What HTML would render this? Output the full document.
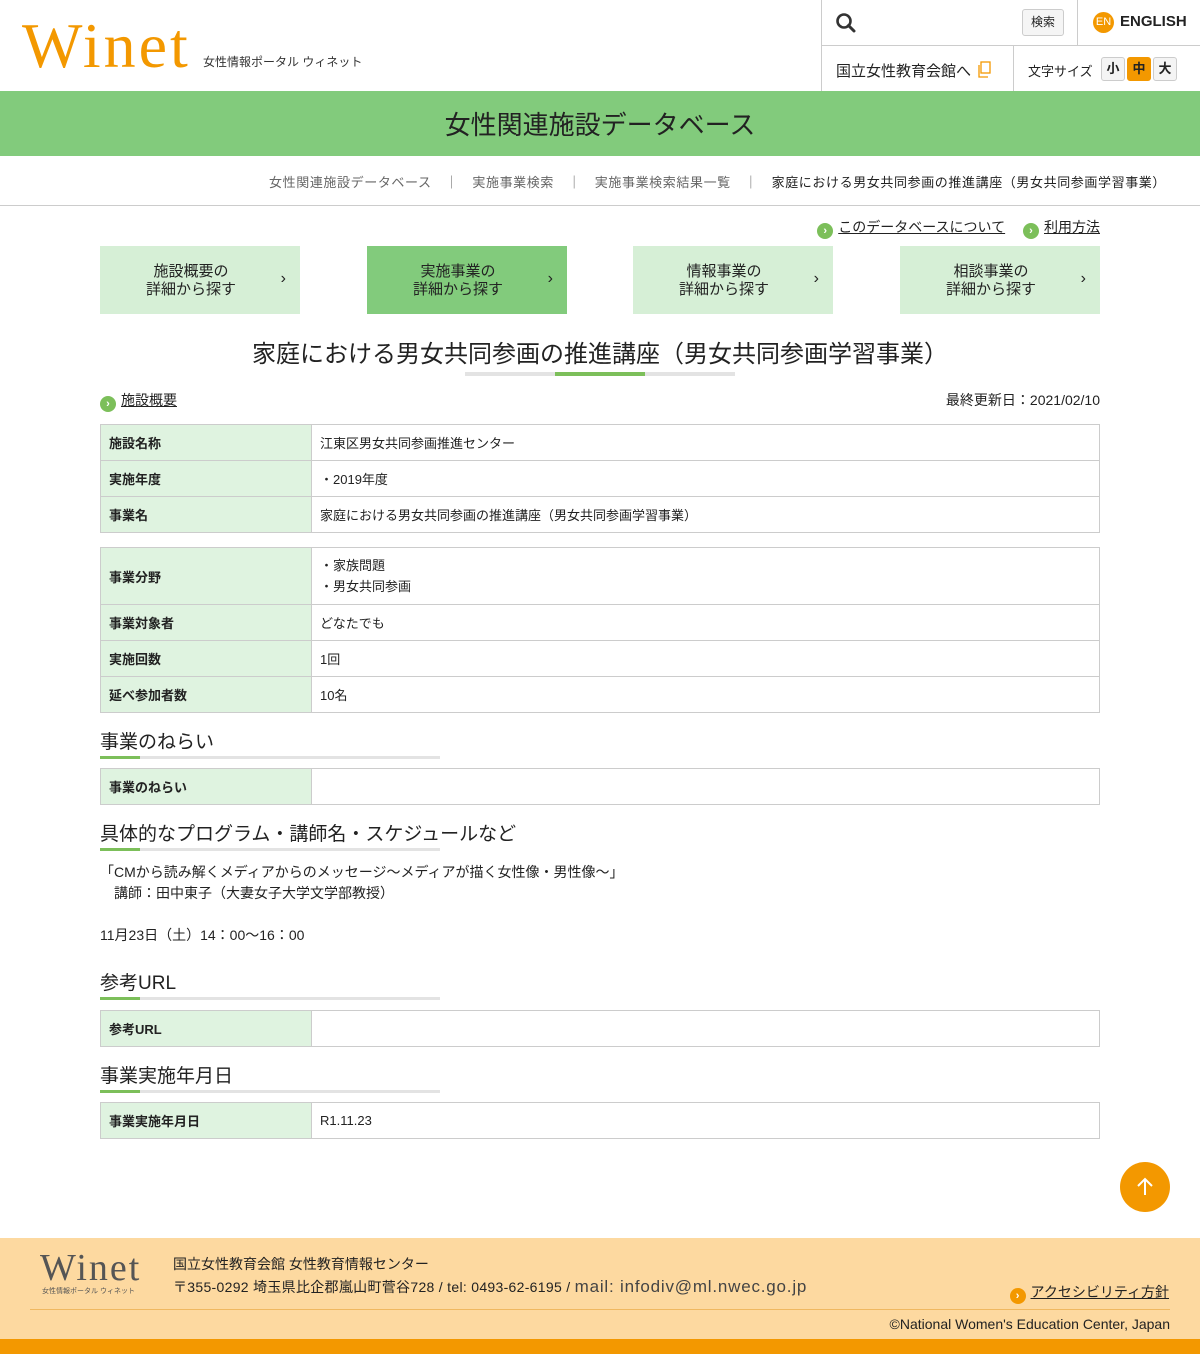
<!DOCTYPE html>
<html><head><meta charset="utf-8">
<style>
*{margin:0;padding:0;box-sizing:border-box}
body{width:1200px;height:1354px;position:relative;background:#fff;font-family:"Liberation Sans","Noto Sans CJK JP",sans-serif;color:#222;overflow:hidden}
.a{position:absolute}
.logo{font-family:"Liberation Serif","Noto Serif CJK SC",serif;color:#f39800;font-size:64px;letter-spacing:3px}
.tag{font-size:12px;color:#333}
.ic{display:inline-block;width:16px;height:16px;border-radius:50%;background:#7cbf5a;color:#fff;font-size:11px;line-height:16px;text-align:center;vertical-align:-2px;margin-right:5px;font-weight:bold}
.btn{position:absolute;top:246px;width:200px;height:68px;background:#d6efd6;font-size:15px;line-height:18px;text-align:center;padding-top:17px;padding-right:18px;color:#222}
.btn span{position:absolute;right:14px;top:24px;font-size:16px}
table{position:absolute;left:100px;width:1000px;border-collapse:collapse;font-size:13px}
td{border:1px solid #ccc;height:36px;padding:0 8px}
td.l{width:211px;background:#dff3e0;font-weight:bold}
.h{position:absolute;left:100px;font-size:19px;color:#222}
.ul{position:absolute;left:100px;width:340px;height:3px;background:#e3e3e3}
.ul:before{content:"";position:absolute;left:0;top:0;width:40px;height:3px;background:#7cbf5a}
.fs{display:inline-block;width:24px;height:24px;border:1px solid #ccc;border-radius:3px;background:#f4f4f4;text-align:center;line-height:22px;font-size:13px;font-weight:bold;margin-left:2px}
</style></head><body>
<div class="a logo" style="left:22px;top:8px;line-height:76px">Winet</div>
<div class="a tag" style="left:203px;top:53px">女性情報ポータル ウィネット</div>
<div class="a" style="left:821px;top:0;width:1px;height:91px;background:#ccc"></div>
<div class="a" style="left:822px;top:45px;width:378px;height:1px;background:#ccc"></div>
<div class="a" style="left:1077px;top:0;width:1px;height:45px;background:#ccc"></div>
<div class="a" style="left:1013px;top:46px;width:1px;height:45px;background:#ccc"></div>
<svg class="a" style="left:835px;top:12px" width="22" height="22" viewBox="0 0 22 22"><circle cx="9" cy="9" r="6.5" fill="none" stroke="#333" stroke-width="2.6"/><path d="M13.5 13.5l5.5 5.5" stroke="#333" stroke-width="3" stroke-linecap="round"/></svg>
<div class="a" style="left:1022px;top:9px;width:42px;height:27px;border:1px solid #ccc;border-radius:3px;background:#f5f5f5;font-size:12px;text-align:center;line-height:25px">検索</div>
<div class="a" style="left:1093px;top:12px;width:21px;height:21px;border-radius:50%;background:#f39800;color:#fff;font-size:11px;text-align:center;line-height:21px">EN</div>
<div class="a" style="left:1120px;top:13px;font-size:15px;font-weight:bold;color:#222">ENGLISH</div>
<div class="a" style="left:836px;top:60px;font-size:15px">国立女性教育会館へ</div>
<svg class="a" style="left:977px;top:61px" width="15" height="17" viewBox="0 0 15 17"><rect x="4" y="1" width="9" height="11" fill="none" stroke="#f39800" stroke-width="1.3"/><path d="M2 4v12h9" fill="none" stroke="#f39800" stroke-width="1.3"/></svg>
<div class="a" style="left:1028px;top:61px;font-size:13px">文字サイズ</div>
<div class="a" style="left:1099px;top:57px"><span class="fs">小</span><span class="fs" style="background:#f39800;border-color:#f39800">中</span><span class="fs">大</span></div>
<div class="a" style="left:0;top:91px;width:1200px;height:65px;background:#82cb7c;text-align:center;font-size:26px;line-height:68px;color:#222">女性関連施設データベース</div>
<div class="a" style="left:0;top:205px;width:1200px;height:1px;background:#ccc"></div>
<div class="a" style="right:34px;top:172px;font-size:13px;letter-spacing:0.6px;color:#666;white-space:nowrap">女性関連施設データベース　｜　実施事業検索　｜　実施事業検索結果一覧　｜　<span style="color:#222">家庭における男女共同参画の推進講座（男女共同参画学習事業）</span></div>
<div class="a" style="right:100px;top:217px;font-size:14px"><span class="ic">›</span><u>このデータベースについて</u>　 <span class="ic">›</span><u>利用方法</u></div>
<div class="btn" style="left:100px">施設概要の<br>詳細から探す<span>›</span></div>
<div class="btn" style="left:367px;background:#82cb7c">実施事業の<br>詳細から探す<span>›</span></div>
<div class="btn" style="left:633px">情報事業の<br>詳細から探す<span>›</span></div>
<div class="btn" style="left:900px">相談事業の<br>詳細から探す<span>›</span></div>
<div class="a" style="left:0;width:1200px;top:334px;text-align:center;font-size:24px;padding-left:0">家庭における男女共同参画の推進講座（男女共同参画学習事業）</div>
<div class="a" style="left:465px;top:372px;width:270px;height:4px;background:#e3e3e3"></div>
<div class="a" style="left:555px;top:372px;width:90px;height:4px;background:#7cbf5a"></div>
<div class="a" style="left:100px;top:390px;font-size:14px"><span class="ic">›</span><u>施設概要</u></div>
<div class="a" style="right:100px;top:390px;font-size:14px">最終更新日：2021/02/10</div>
<table style="top:424px"><tr><td class="l">施設名称</td><td>江東区男女共同参画推進センター</td></tr><tr><td class="l">実施年度</td><td>・2019年度</td></tr><tr><td class="l">事業名</td><td>家庭における男女共同参画の推進講座（男女共同参画学習事業）</td></tr></table>
<table style="top:547px"><tr><td class="l" style="height:57px">事業分野</td><td style="line-height:21px">・家族問題<br>・男女共同参画</td></tr><tr><td class="l">事業対象者</td><td>どなたでも</td></tr><tr><td class="l">実施回数</td><td>1回</td></tr><tr><td class="l">延べ参加者数</td><td>10名</td></tr></table>
<div class="h" style="top:727px">事業のねらい</div><div class="ul" style="top:756px"></div>
<table style="top:768px"><tr><td class="l">事業のねらい</td><td></td></tr></table>
<div class="h" style="top:819px">具体的なプログラム・講師名・スケジュールなど</div><div class="ul" style="top:848px"></div>
<div class="a" style="left:100px;top:862px;font-size:14px;line-height:21px">「CMから読み解くメディアからのメッセージ～メディアが描く女性像・男性像～」<br>　講師：田中東子（大妻女子大学文学部教授）<br><br>11月23日（土）14：00～16：00</div>
<div class="h" style="top:968px">参考URL</div><div class="ul" style="top:997px"></div>
<table style="top:1010px"><tr><td class="l">参考URL</td><td></td></tr></table>
<div class="h" style="top:1061px">事業実施年月日</div><div class="ul" style="top:1090px"></div>
<table style="top:1102px"><tr><td class="l">事業実施年月日</td><td>R1.11.23</td></tr></table>
<div class="a" style="left:1120px;top:1162px;width:50px;height:50px;border-radius:50%;background:#f39800"></div>
<svg class="a" style="left:1120px;top:1162px" width="50" height="50"><path d="M25 33V17M18 24l7-7 7 7" fill="none" stroke="#fff" stroke-width="2"/></svg>
<div class="a" style="left:0;top:1238px;width:1200px;height:101px;background:#fdd9a0"></div>
<div class="a" style="left:40px;top:1246px;font-family:'Liberation Serif',serif;font-size:38px;letter-spacing:2px;color:#555">Winet</div>
<div class="a" style="left:42px;top:1286px;font-size:7px;color:#555">女性情報ポータル ウィネット</div>
<div class="a" style="left:173px;top:1254px;font-size:14px">国立女性教育会館 女性教育情報センター</div>
<div class="a" style="left:173px;top:1277px;font-size:14px;letter-spacing:0.3px">〒355-0292 埼玉県比企郡嵐山町菅谷728 / tel: 0493-62-6195 / <span style="font-size:17px;color:#444;letter-spacing:0.8px">mail: infodiv@ml.nwec.go.jp</span></div>
<div class="a" style="right:31px;top:1282px;font-size:14px"><span class="ic" style="background:#f39800">›</span><u>アクセシビリティ方針</u></div>
<div class="a" style="left:30px;top:1309px;width:1140px;height:1px;background:#f0b860"></div>
<div class="a" style="right:30px;top:1316px;font-size:14px">©National Women's Education Center, Japan</div>
<div class="a" style="left:0;top:1339px;width:1200px;height:15px;background:#f39800"></div>
</body></html>
